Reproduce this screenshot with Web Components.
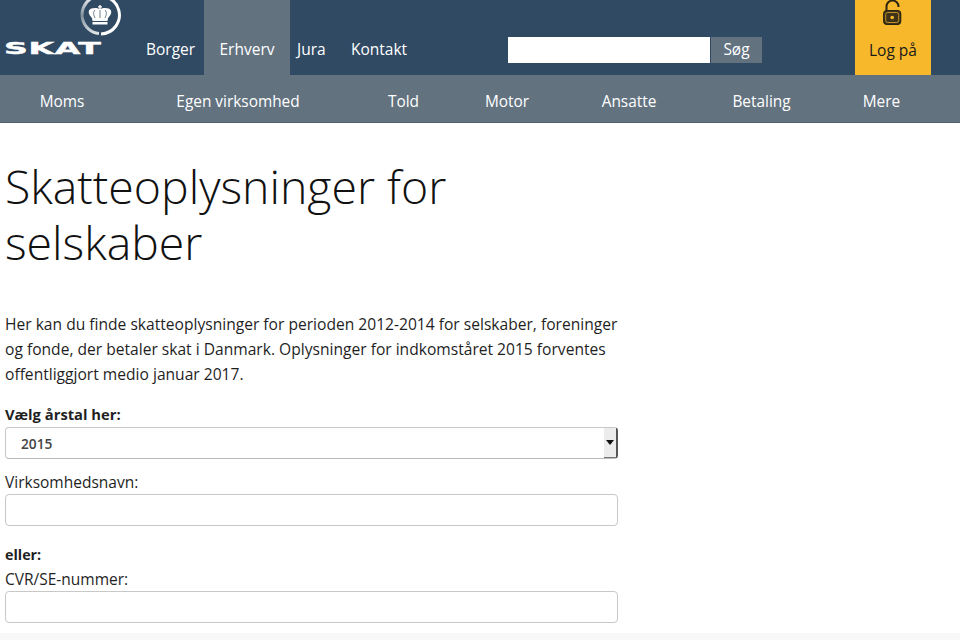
<!DOCTYPE html>
<html lang="da"><head><meta charset="utf-8"><title>Skatteoplysninger</title>
<style>html,body{margin:0;height:640px;overflow:hidden;background:#fff;font-family:"Open Sans",sans-serif}</style></head>
<body>
<skat-header></skat-header>
<skat-subnav></skat-subnav>
<skat-form></skat-form>
<script>
function def(name, html){customElements.define(name,class extends HTMLElement{constructor(){super();this.attachShadow({mode:'open'}).innerHTML=html}})}
def('skat-header',`<style>
:host{display:flex;height:75px;background:#304a63;color:#fff;font:500 15.5px/1 "Open Sans",sans-serif;overflow:hidden}
.logo{width:146px;position:relative}
.logo svg{position:absolute;left:78px;top:-7px}
.word{position:absolute;left:4px;top:41px;font:700 15px/17px "DejaVu Sans",sans-serif;letter-spacing:.3px;transform-origin:0 50%;transform:scaleX(2.2);white-space:nowrap;-webkit-text-stroke:.4px #fff}
nav{display:flex;align-items:stretch;width:362px}
nav a{display:flex;align-items:center;padding-top:24px;box-sizing:border-box}
.b{width:58px}.e{width:86px;background:#62727f;justify-content:center}.j{width:61px;padding-left:7px}
form{display:flex;align-self:flex-start;margin:37px 0 0;width:347px;height:26px}
.in{width:202px;background:#fff}
.btn{margin-left:1px;width:51px;background:#62727f;display:flex;align-items:center;justify-content:center}
.log{width:76px;background:#f7b92b;color:#1a1a1a;display:flex;flex-direction:column;align-items:center}
.log span{margin-top:17px}
</style>
<div class="logo"><svg width="44" height="44" viewBox="0 0 44 44">
<defs><linearGradient id="g" x1="0" y1="0" x2="0" y2="1"><stop offset="0" stop-color="#e4e8eb"/><stop offset=".5" stop-color="#7f8f9b"/><stop offset="1" stop-color="#dfe3e6"/></linearGradient></defs>
<path d="M21 40.500A19 19 0 0 1 13 5.500" fill="none" stroke="url(#g)" stroke-width="3"/>
<path d="M13 5.500A19 19 0 1 1 23 41" fill="none" stroke="#fff" stroke-width="3"/>
<path fill="#fff" d="M21.300 12h1.400v1.200h1.300v1.300h-1.300v1.800h-1.400v-1.800h-1.300v-1.300h1.300zM22 16.500C25 14.500 31 14.500 33 17.500 34 20 32 23 30 25L29.500 28H14.500L14 25C12 23 10 20 11 17.500 13 14.500 19 14.500 22 16.500zM14.500 29h15v2.500h-15z"/>
<path d="M22 17v8M17 17c-2 2-1.500 5 0 8M27 17c2 2 1.500 5 0 8" fill="none" stroke="#304a63" stroke-width=".7"/></svg>
<span class="word">SKAT</span></div>
<nav><a class="b">Borger</a><a class="e">Erhverv</a><a class="j">Jura</a><a>Kontakt</a></nav>
<form onsubmit="return false"><div class="in"></div><div class="btn">Søg</div></form>
<div class="log"><svg width="24" height="26" viewBox="0 0 24 26" fill="none" stroke="#2b2412"><path d="M5.500 11V6.500a6 6 0 0 1 12 0v.5" stroke-width="2"/><rect x="2.700" y="10.500" width="17" height="14" rx="3.500" fill="#40331a" stroke-width="1.200"/><rect x="4.700" y="12.500" width="13" height="10" rx="2" stroke="#f7b92b" stroke-width=".7"/><circle cx="11.200" cy="17.500" r="1.800" fill="#f7b92b" stroke="none"/></svg><span>Log på</span></div>`);
def('skat-subnav',`<style>
:host{display:grid;grid-template-columns:124px 228px 103px 104px 140px 125px 115px;height:48px;box-sizing:border-box;background:#62727f;color:#fff;font:500 15.4px/54px "Open Sans",sans-serif;border-bottom:1px solid #50626f;text-align:center}
</style><span>Moms</span><span>Egen virksomhed</span><span>Told</span><span>Motor</span><span>Ansatte</span><span>Betaling</span><span>Mere</span>`);
def('skat-form',`<style>
:host{display:block;box-sizing:border-box;height:517px;padding:35px 0 0 5px;color:#1f1f1f;font:15.5px/25px "Open Sans",sans-serif;background:linear-gradient(#fff 510px,#f8f8f8 510px)}
h1{margin:0 0 42px;font:300 46.4px/56px "Open Sans",sans-serif;color:#111;width:520px}
p{margin:0 0 15px;width:615px;font-size:15.6px}
label{display:block;line-height:22px}
.l1{line-height:25px}
b{font-weight:700;font-size:14.75px}
.box{box-sizing:border-box;width:613px;height:32px;border:1px solid #c8c8c8;border-radius:4px;background:#fff;display:flex;align-items:center}
.sel{padding-left:15px;font-size:13.7px;font-weight:600;color:#444;position:relative;margin-bottom:12px;border-right:2px solid #555;border-bottom-color:#bbb}
.arr{position:absolute;right:0;top:0;bottom:0;width:12px;background:#ececec;border-bottom:1px solid #777;display:flex;align-items:center;justify-content:center}
.arr i{width:0;height:0;border:4px solid transparent;border-top:5px solid #111;border-bottom:0}
.e{margin:16px 0 1px}.e b{font-size:14.3px}
</style>
<h1>Skatteoplysninger for selskaber</h1>
<p>Her kan du finde skatteoplysninger for perioden 2012-2014 for selskaber, foreninger og fonde, der betaler skat i Danmark. Oplysninger for indkomståret 2015 forventes offentliggjort medio januar 2017.</p>
<label class="l1"><b>Vælg årstal her:</b></label>
<div class="box sel">2015<span class="arr"><i></i></span></div>
<label>Virksomhedsnavn:</label>
<div class="box" style="margin-top:1px"></div>
<div class="e"><b>eller:</b></div>
<label>CVR/SE-nummer:</label>
<div class="box" style="margin-top:1px"></div>`);
</script></body></html>
